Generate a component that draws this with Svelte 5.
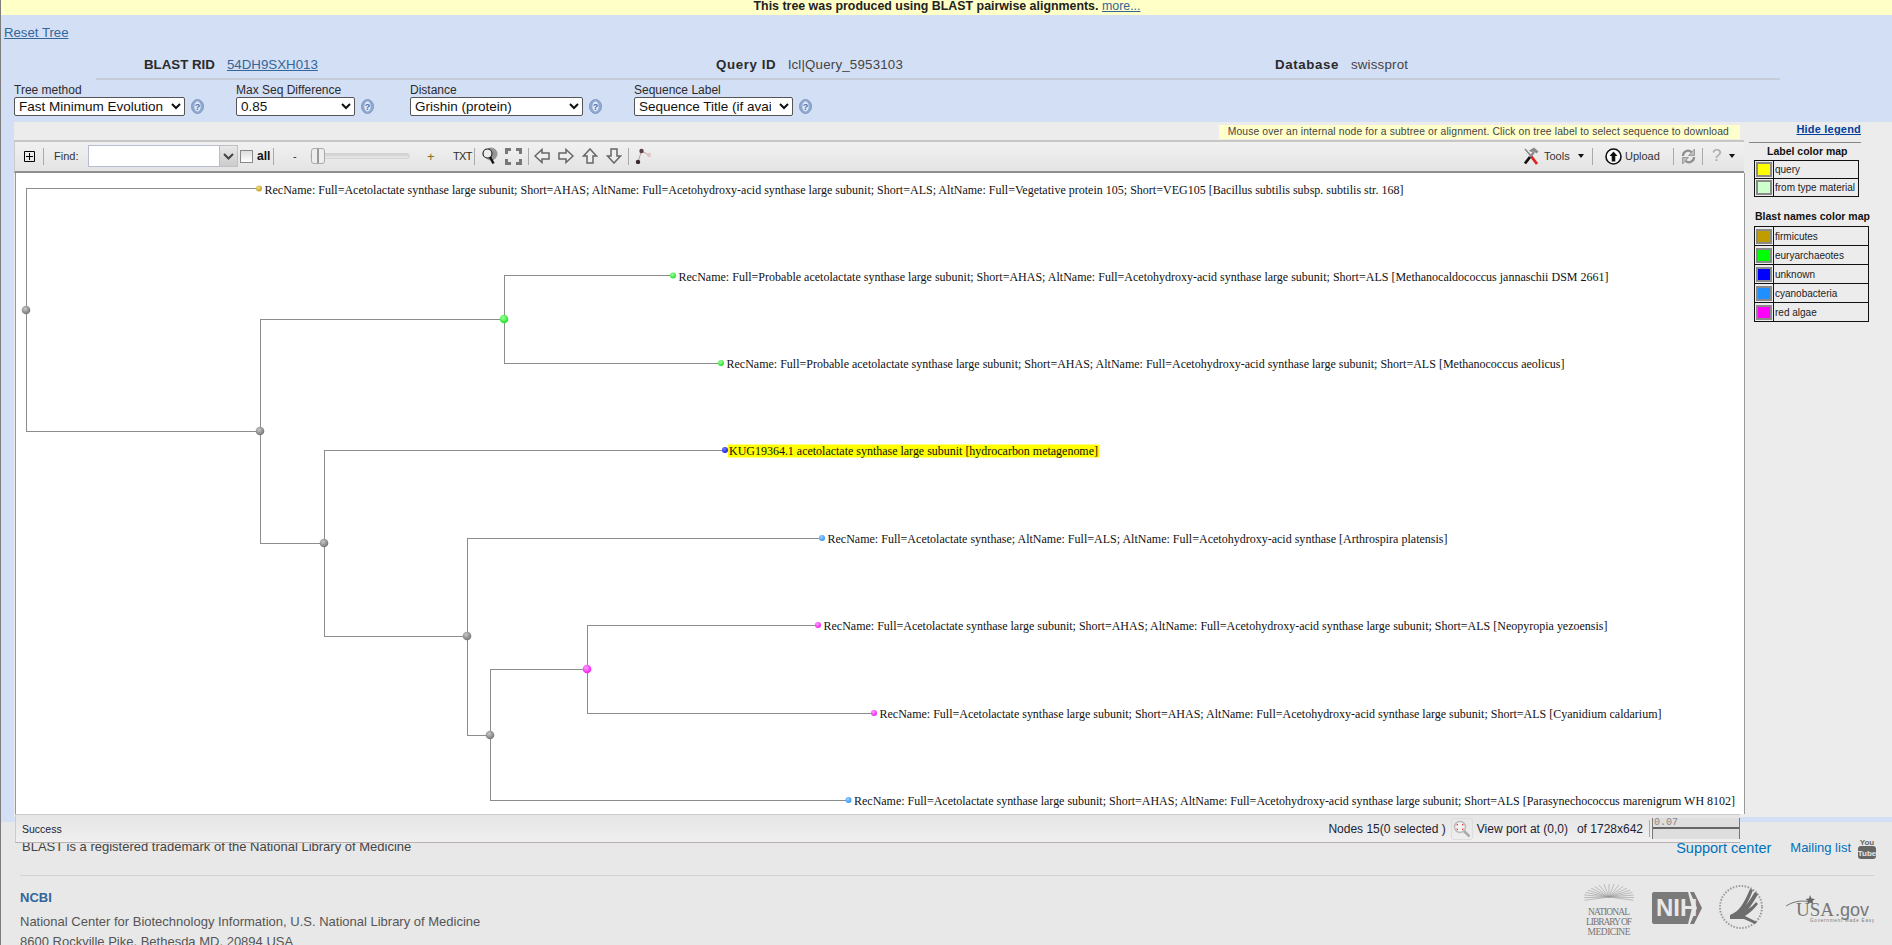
<script lang="ts">
  const treeNodes = [
    { id: "root", x: 26, y: 310, color: "gray", r: 4.3 },
    { id: "a", parent: "root", x: 260, y: 431, color: "gray", r: 4.3 },
    { id: "b", parent: "a", x: 504, y: 319, color: "green", r: 4.3 },
    { id: "c", parent: "a", x: 324, y: 543, color: "gray", r: 4.3 },
    { id: "d", parent: "c", x: 467, y: 636, color: "gray", r: 4.3 },
    { id: "e", parent: "d", x: 490, y: 735, color: "gray", r: 4.3 },
    { id: "f", parent: "e", x: 587, y: 669, color: "magenta", r: 4.3 },
    {
      id: "t1", parent: "root", x: 259, y: 188.5, color: "gold", r: 3, w: 1139,
      label: "RecName: Full=Acetolactate synthase large subunit; Short=AHAS; AltName: Full=Acetohydroxy-acid synthase large subunit; Short=ALS; AltName: Full=Vegetative protein 105; Short=VEG105 [Bacillus subtilis subsp. subtilis str. 168]",
    },
    {
      id: "t2", parent: "b", x: 673, y: 275.5, color: "green", r: 3, w: 930,
      label: "RecName: Full=Probable acetolactate synthase large subunit; Short=AHAS; AltName: Full=Acetohydroxy-acid synthase large subunit; Short=ALS [Methanocaldococcus jannaschii DSM 2661]",
    },
    {
      id: "t3", parent: "b", x: 721, y: 363, color: "green", r: 3, w: 838,
      label: "RecName: Full=Probable acetolactate synthase large subunit; Short=AHAS; AltName: Full=Acetohydroxy-acid synthase large subunit; Short=ALS [Methanococcus aeolicus]",
    },
    {
      id: "t4", parent: "c", x: 725, y: 450, color: "blue", r: 3, w: 369, query: true,
      label: "KUG19364.1 acetolactate synthase large subunit [hydrocarbon metagenome]",
    },
    {
      id: "t5", parent: "d", x: 822, y: 538, color: "dodger", r: 3, w: 620,
      label: "RecName: Full=Acetolactate synthase; AltName: Full=ALS; AltName: Full=Acetohydroxy-acid synthase [Arthrospira platensis]",
    },
    {
      id: "t6", parent: "f", x: 818, y: 625, color: "magenta", r: 3, w: 784,
      label: "RecName: Full=Acetolactate synthase large subunit; Short=AHAS; AltName: Full=Acetohydroxy-acid synthase large subunit; Short=ALS [Neopyropia yezoensis]",
    },
    {
      id: "t7", parent: "f", x: 874, y: 713, color: "magenta", r: 3, w: 782,
      label: "RecName: Full=Acetolactate synthase large subunit; Short=AHAS; AltName: Full=Acetohydroxy-acid synthase large subunit; Short=ALS [Cyanidium caldarium]",
    },
    {
      id: "t8", parent: "e", x: 848.5, y: 800, color: "dodger", r: 3, w: 881,
      label: "RecName: Full=Acetolactate synthase large subunit; Short=AHAS; AltName: Full=Acetohydroxy-acid synthase large subunit; Short=ALS [Parasynechococcus marenigrum WH 8102]",
    },
  ];

  const byId = Object.fromEntries(treeNodes.map((n) => [n.id, n]));

  function branch(n) {
    const p = byId[n.parent];
    return `M${p.x} ${p.y}V${n.y}H${n.x}`;
  }

  const palette = {
    gray: ["#c8c8c8", "#6e6e6e"],
    green: ["#a0ffa0", "#16e016"],
    magenta: ["#ffa0ff", "#f010f0"],
    gold: ["#f0e090", "#b89a10"],
    blue: ["#8080ff", "#1010e0"],
    dodger: ["#a0d0ff", "#2a90f0"],
  };

  const labelMap = [
    { color: "#ffff00", name: "query" },
    { color: "#ccffcc", name: "from type material" },
  ];
  const blastMap = [
    { color: "#c09c00", name: "firmicutes" },
    { color: "#00ff00", name: "euryarchaeotes" },
    { color: "#0000ff", name: "unknown" },
    { color: "#1e90ff", name: "cyanobacteria" },
    { color: "#ff00ff", name: "red algae" },
  ];

  // fan of thin lines on the library logo
  const rays = Array.from({ length: 19 }, (_, i) => {
    const a = Math.PI * (-0.08 + (1.16 * i) / 18);
    return { x: 25 + Math.cos(a) * 25, y: 14 - Math.sin(a) * 13 };
  });
</script>

{#snippet help()}
  <svg class="help" width="13" height="15" viewBox="0 0 13 15">
    <ellipse cx="6.5" cy="7.5" rx="6" ry="7" fill="#8fa9d2" stroke="#8298bf" />
    <ellipse cx="6.5" cy="7.5" rx="3.2" ry="5" fill="#dfe9f8" />
    <text x="6.5" y="11" text-anchor="middle" class="help-mark">?</text>
  </svg>
{/snippet}

{#snippet arrow(rotate)}
  <svg class="arrow" width="16" height="16" viewBox="0 0 16 16">
    <path
      d="M1 8 8 1.5V5h7v6H8v3.5z"
      fill="#eee"
      stroke="#666"
      stroke-width="1.5"
      transform={`rotate(${rotate} 8 8)`}
    />
  </svg>
{/snippet}

<div class="page">
  <div class="notice">
    <b>This tree was produced using BLAST pairwise alignments.</b>
    <a href="#more">more...</a>
  </div>

  <div class="blue">
    <div class="reset"><a href="#reset">Reset Tree</a></div>

    <div class="info">
      <div><b>BLAST RID</b><a href="#rid">54DH9SXH013</a></div>
      <div><b>Query ID</b><span>lcl|Query_5953103</span></div>
      <div><b>Database</b><span>swissprot</span></div>
    </div>

    <div class="form">
      <div class="field">
        <label for="method">Tree method</label>
        <div class="control">
          <select id="method" class="w-method"><option>Fast Minimum Evolution</option></select>
          {@render help()}
        </div>
      </div>
      <div class="field">
        <label for="seqdiff">Max Seq Difference</label>
        <div class="control">
          <select id="seqdiff" class="w-diff"><option>0.85</option></select>
          {@render help()}
        </div>
      </div>
      <div class="field">
        <label for="dist">Distance</label>
        <div class="control">
          <select id="dist" class="w-dist"><option>Grishin (protein)</option></select>
          {@render help()}
        </div>
      </div>
      <div class="field">
        <label for="seqlabel">Sequence Label</label>
        <div class="control">
          <select id="seqlabel" class="w-label"><option>Sequence Title (if available)</option></select>
          {@render help()}
        </div>
      </div>
    </div>

    <div class="workspace">
      <div class="viewer">
        <div class="strip">
          <span class="hint">Mouse over an internal node for a subtree or alignment. Click on tree label to select sequence to download</span>
        </div>

        <div class="toolbar">
          <svg class="plus" width="11" height="11" viewBox="0 0 11 11">
            <path d="M.5.5h10v10H.5zM5.5 2v7M2 5.5h7" fill="none" stroke="#000" />
          </svg>
          <i class="sep s-plus"></i>
          <span class="find">Find:</span>
          <div class="combo">
            <input aria-label="Find" />
            <span class="combo-btn">
              <svg width="11" height="7" viewBox="0 0 11 7"><path d="M1 1l4.5 4.5L10 1" fill="none" stroke="#444" stroke-width="2" /></svg>
            </span>
          </div>
          <span class="check"></span>
          <b class="all">all</b>
          <i class="sep s-all"></i>
          <span class="minus">-</span>
          <div class="slider"><span class="thumb"></span></div>
          <span class="add">+</span>
          <span class="txt">TXT</span>
          <i class="sep s-txt"></i>
          <svg class="mag" width="17" height="19" viewBox="0 0 17 19">
            <circle cx="10" cy="7" r="6.5" fill="#969696" />
            <circle cx="6.500" cy="6.500" r="4.500" fill="#ececec" stroke="#222" stroke-width="1.200" />
            <path d="M9 10l3.500 6.500" stroke="#111" stroke-width="2.400" />
          </svg>
          <svg class="expand" width="17" height="17" viewBox="0 0 17 17">
            <path d="M1.500 6V1.500H6M11 1.500h4.500V6M15.500 11v4.500H11M6 15.500H1.500V11" fill="none" stroke="#777" stroke-width="3" />
          </svg>
          <i class="sep s-exp"></i>
          <span class="arrows">
            {@render arrow(0)}
            {@render arrow(180)}
            {@render arrow(90)}
            {@render arrow(270)}
          </span>
          <i class="sep s-arr"></i>
          <svg class="layout" width="16" height="16" viewBox="0 0 16 16">
            <path d="M3 14 6.500 3 14 7" fill="none" stroke="#b9a0a0" />
            <circle cx="3" cy="14" r="2.200" fill="#3a2a2a" />
            <circle cx="6.500" cy="3" r="2.200" fill="#5a4040" />
            <circle cx="14" cy="7" r="2.200" fill="#e0c8c8" />
          </svg>

          <svg class="tools" width="16" height="18" viewBox="0 0 16 18">
            <path d="M2 2 8 9" stroke="#8a8a8a" stroke-width="1.600" />
            <path d="M8 9l6 8" stroke="#d22" stroke-width="2.800" />
            <path d="M6 3.500 11 .5l4.500 4-2 2L11 4.500 8 5z" fill="#8a8a8a" />
            <path d="M11 5 7 10" stroke="#8a8a8a" stroke-width="2.200" />
            <path d="M7 10 2 16.500" stroke="#111" stroke-width="2.800" />
          </svg>
          <span class="tools-label">Tools</span>
          <i class="caret c-tools"></i>
          <i class="sep s-tools"></i>
          <svg class="upload" width="17" height="17" viewBox="0 0 17 17">
            <circle cx="8.500" cy="8.500" r="7.500" fill="#fff" stroke="#111" stroke-width="1.600" />
            <path d="M8.500 3.500l4 4.500H10.300v5.500H6.700V8H4.500z" fill="#111" />
          </svg>
          <span class="upload-label">Upload</span>
          <i class="sep s-up"></i>
          <svg class="refresh" width="15" height="17" viewBox="0 0 15 17">
            <path d="M2 8A5 5 0 0 1 10.500 4.200" fill="none" stroke="#8f8f8f" stroke-width="2.200" />
            <path d="M13.500 1v6.500H7.500z" fill="#bdbdbd" stroke="#8f8f8f" stroke-width=".8" />
            <path d="M13 9A5 5 0 0 1 4.500 12.800" fill="none" stroke="#8f8f8f" stroke-width="2.200" />
            <path d="M1.500 16V9.500H7.500z" fill="#bdbdbd" stroke="#8f8f8f" stroke-width=".8" />
          </svg>
          <i class="sep s-ref"></i>
          <span class="q">?</span>
          <i class="caret c-q"></i>
        </div>

        <div class="tree">
          <svg width="1727" height="640" viewBox="16 173 1727 640">
            <defs>
              {#each Object.entries(palette) as [name, stops]}
                <radialGradient id={`ball-${name}`} cx="40%" cy="35%" r="70%">
                  <stop offset="0" stop-color={stops[0]} />
                  <stop offset="1" stop-color={stops[1]} />
                </radialGradient>
              {/each}
            </defs>
            {#each treeNodes as n}
              {#if n.parent}
                <path d={branch(n)} fill="none" stroke="#8c8c8c" shape-rendering="crispEdges" />
              {/if}
            {/each}
            {#each treeNodes as n}
              <circle cx={n.x} cy={n.y} r={n.r} fill={`url(#ball-${n.color})`} />
              {#if n.query}
                <rect x={n.x + 3} y={n.y - 5.5} width={n.w + 2} height="13" fill="#ffff00" />
              {/if}
              {#if n.label}
                <text x={n.query ? n.x + 4 : n.x + 5.5} y={n.y + 5} textLength={n.w} class="leaf">{n.label}</text>
              {/if}
            {/each}
          </svg>
        </div>

        <div class="status">
          <span class="success">Success</span>
          <div class="stats">
            <span class="nodes">Nodes 15(0 selected )</span>
            <span class="zoom-btn">
              <svg width="18" height="18" viewBox="0 0 18 18">
                <circle cx="7" cy="7" r="5.500" fill="#f2f2f2" stroke="#bbb" stroke-width="1.500" />
                <path d="M5 4.500H4V5.500M9 4.500h1v1M10 8.500v1H9M5 9.500H4v-1" fill="none" stroke="#e03030" />
                <path d="M11 11l5.500 5.500" stroke="#aaa" stroke-width="2.500" />
              </svg>
            </span>
            <span>View port at (0,0)</span>
            <span class="extent">of 1728x642</span>
            <i class="sep s-extent"></i>
            <div class="scale"><span>0.07</span></div>
          </div>
        </div>
      </div>

      <aside class="legend">
        <a href="#hide" class="hide">Hide legend</a>
        <h4 class="first">Label color map</h4>
        <table class="small">
          <tbody>
            {#each labelMap as row}
              <tr><td class="sw"><span style:background={row.color}></span></td><td>{row.name}</td></tr>
            {/each}
          </tbody>
        </table>
        <h4 class="second">Blast names color map</h4>
        <table class="large">
          <tbody>
            {#each blastMap as row}
              <tr><td class="sw"><span style:background={row.color}></span></td><td>{row.name}</td></tr>
            {/each}
          </tbody>
        </table>
      </aside>
    </div>
  </div>

  <footer>
    <div class="foot-top">
      <span class="trademark">BLAST is a registered trademark of the National Library of Medicine</span>
      <div class="foot-links">
        <a href="#support">Support center</a>
        <a href="#mail">Mailing list</a>
        <svg width="20" height="24" viewBox="0 0 20 24">
          <text x="10" y="8.500" text-anchor="middle" class="yt">You</text>
          <rect x="1" y="10" width="18" height="13" rx="3" fill="#666" />
          <text x="10" y="20" text-anchor="middle" class="yt yt-tube">Tube</text>
        </svg>
      </div>
    </div>
    <div class="foot-main">
      <div class="address">
        <a href="#ncbi">NCBI</a>
        <p>National Center for Biotechnology Information, U.S. National Library of Medicine</p>
        <p>8600 Rockville Pike, Bethesda MD, 20894 USA</p>
      </div>
      <div class="logos">
        <svg width="52" height="54" viewBox="0 0 52 54">
          {#each rays as r}
            <path d={`M25 14L${r.x} ${r.y}`} stroke="#999" stroke-width=".6" />
          {/each}
          <text x="25" y="32" text-anchor="middle" textLength="42" class="nlm">NATIONAL</text>
          <text x="25" y="42" text-anchor="middle" textLength="46" class="nlm">LIBRARY OF</text>
          <text x="25" y="52" text-anchor="middle" textLength="43" class="nlm">MEDICINE</text>
        </svg>
        <svg class="nih" width="50" height="32" viewBox="0 0 50 32">
          <path d="M2 0H36L40 16 36 32H2a2 2 0 0 1-2-2V2a2 2 0 0 1 2-2z" fill="#7a7a7a" />
          <path d="M38 0h4l8 16-8 16h-4l7-16z" fill="#7a7a7a" />
          <text x="4" y="24" class="nih-text">NIH</text>
        </svg>
        <svg class="hhs" width="52" height="48" viewBox="0 0 52 48">
          <circle cx="23" cy="24" r="21" fill="none" stroke="#999" stroke-width="2" stroke-dasharray="1.500 1.500" />
          <path d="M12 32C22 28 26 20 32 6l3 1c-3 8-5 12-7 15 3-3 6-9 9-13l3 2c-4 7-7 12-10 15 3-2 6-4 8-7l2 2c-4 5-8 9-13 12l12 6-2 2-11-5-14 0z" fill="#6d6d6d" />
        </svg>
        <svg class="usa" width="88" height="30" viewBox="0 0 88 30">
          <path d="M0 11C8 6 16 5 24 7" fill="none" stroke="#777" />
          <path d="M24 0l1.500 3.500 3.500.5-2.500 2 1 3.500-3.500-2-3 2 1-3.500-2.500-2 3.500-.5z" fill="#666" />
          <text x="10" y="21" class="usa-big">USA</text>
          <text x="49" y="21" class="usa-gov">.gov</text>
          <text x="24" y="27" textLength="64" class="usa-small">Government Made Easy</text>
        </svg>
      </div>
    </div>
  </footer>
</div>

<style>
  :global(body) {
    margin: 0;
    background: #e8e8e8;
  }
  * {
    box-sizing: border-box;
  }
  .page {
    height: 945px;
    overflow: hidden;
    border-left: 1px solid #7d7d7d;
    font-family: "Liberation Sans", Arial, sans-serif;
    color: #2b2b2b;
    font-size: 13px;
  }
  a {
    color: #336699;
  }
  .notice {
    height: 15px;
    background: #ffffc8;
    text-align: center;
    font-size: 12.4px;
    line-height: 13px;
    color: #222;
    padding-left: 1px;
  }
  .blue {
    height: 807px;
    background: #d3dff5;
  }
  .reset {
    height: 36px;
    padding: 11px 0 0 3px;
    font-size: 13.2px;
    line-height: 14px;
  }
  .info {
    display: grid;
    grid-template-columns: 572px 559px 1fr;
    height: 29px;
    margin-left: 95px;
    width: 1684px;
    padding: 6px 0 0 48px;
    border-bottom: 2px solid #c6ccd8;
    font-size: 13.3px;
    line-height: 15px;
  }
  .info b {
    margin-right: 12px;
  }
  .info div + div b {
    letter-spacing: 0.6px;
  }
  .info span {
    color: #444;
    letter-spacing: 0.2px;
  }
  .form {
    display: grid;
    grid-template-columns: 222px 174px 224px 1fr;
    height: 42px;
    padding: 3px 0 0 13px;
  }
  .field label {
    display: block;
    height: 14px;
    font-size: 12px;
    line-height: 14px;
  }
  .control {
    display: flex;
    align-items: center;
    gap: 6px;
  }
  select {
    height: 19px;
    font: 13.5px "Liberation Sans", Arial, sans-serif;
    background: #fff;
    color: #111;
    border: 1px solid #555;
    border-radius: 2px;
  }
  .w-method { width: 171px; }
  .w-diff { width: 119px; }
  .w-dist { width: 173px; }
  .w-label { width: 159px; padding-right: 5px; }
  .help-mark {
    font: bold 9px "Liberation Sans", sans-serif;
    fill: #4a70b0;
  }
  .workspace {
    display: grid;
    grid-template-columns: 1731px 135px;
    grid-template-rows: 695px;
    margin-left: 13px;
    background: #ececec;
  }
  .viewer {
    position: relative;
    z-index: 1;
    height: 721px;
  }
  .strip {
    display: flex;
    justify-content: flex-end;
    height: 18px;
    padding-top: 3px;
    margin-right: 5px;
  }
  .hint {
    height: 14px;
    padding: 0 11px 0 9px;
    background: #ffffcc;
    font-size: 10.3px;
    line-height: 14px;
    letter-spacing: 0.15px;
    color: #444;
    white-space: nowrap;
  }
  .toolbar {
    display: flex;
    align-items: center;
    height: 33px;
    margin-right: 1px;
    padding-bottom: 1px;
    border-top: 2px solid #c9c6c6;
    border-bottom: 2px solid #8f8f8f;
    border-left: 1px solid #ccc;
    background: linear-gradient(#f1f1f1, #e4e4e4);
    font-size: 11px;
    white-space: nowrap;
  }
  .toolbar .plus { margin-left: 9px; }
  .sep {
    display: block;
    width: 1px;
    height: 17px;
    background: #aaa;
    flex: none;
  }
  .s-plus { margin-left: 8px; }
  .find { margin-left: 10px; color: #333; width: 34px; font-size: 11px; }
  .combo {
    display: flex;
    width: 150px;
    height: 22px;
  }
  .combo input {
    width: 132px;
    height: 22px;
    border: 1px solid #b8bcd0;
    background: #fff;
    padding: 0;
  }
  .combo-btn {
    display: flex;
    align-items: center;
    justify-content: center;
    width: 18px;
    background: linear-gradient(#e8e8e8, #ccc);
    border: 1px solid #c0c0c0;
    border-left: 0;
  }
  .check {
    width: 13px;
    height: 13px;
    margin-left: 2px;
    border: 1px solid #888;
    background: linear-gradient(#ddd, #fff);
  }
  .all { margin-left: 4px; font-size: 12px; color: #111; width: 16px; }
  .s-all { margin-left: 0; }
  .minus { margin-left: 19px; width: 17px; }
  .slider {
    position: relative;
    width: 100px;
    height: 6px;
    border-radius: 3px;
    background: linear-gradient(#d0d0d0, #e8e8e8);
    border: 1px solid #d4d4d4;
  }
  .thumb {
    position: absolute;
    left: 0;
    top: -6px;
    width: 14px;
    height: 16px;
    border: 1px solid #aaa;
    border-radius: 3px;
    background: linear-gradient(90deg, #eee 45%, #999 45%, #999 55%, #eee 55%);
  }
  .add { margin-left: 17px; width: 10px; font-size: 13px; color: #8a6d1a; }
  .txt { margin-left: 16px; width: 21px; letter-spacing: -0.6px; font-size: 11px; }
  .s-txt { margin-left: 0; }
  .mag { margin-left: 6px; }
  .expand { margin-left: 7px; }
  .s-exp { margin-left: 6px; }
  .arrows {
    display: flex;
    gap: 8px;
    margin-left: 5px;
  }
  .s-arr { margin-left: 6px; }
  .layout { margin-left: 6px; }
  .tools { margin-left: auto; }
  .tools-label {
    margin-left: 5px;
    width: 30px;
    font-size: 11px;
    color: #333;
  }
  .caret {
    width: 0;
    height: 0;
    border: 3px solid transparent;
    border-top: 4px solid #111;
    border-bottom: 0;
    flex: none;
  }
  .c-tools { margin-left: 4px; }
  .s-tools { margin-left: 8px; }
  .upload { margin-left: 12px; }
  .upload-label {
    margin-left: 3px;
    width: 37px;
    font-size: 11px;
    color: #333;
  }
  .s-up { margin-left: 11px; }
  .refresh { margin-left: 7px; }
  .s-ref { margin-left: 6px; }
  .q {
    margin-left: 9px;
    width: 9px;
    font-size: 17px;
    color: #aaa;
  }
  .c-q { margin: 0 9px 0 8px; }
  .tree {
    height: 641px;
    margin-right: 0;
    background: #fff;
    border-left: 1px solid #999;
    border-right: 1px solid #999;
    overflow: hidden;
    margin-left: 1px;
  }
  .tree svg {
    display: block;
  }
  .leaf {
    font: 12px "Liberation Serif", "Times New Roman", serif;
    fill: #111;
  }
  .status {
    display: flex;
    align-items: center;
    justify-content: space-between;
    width: 1725px;
    height: 29px;
    margin-left: 1px;
    padding: 0 0 0 6px;
    border-top: 1px solid #ccc;
    border-left: 1px solid #ccc;
    border-bottom: 1px solid #b9b0b0;
    background: linear-gradient(#e5e5e5, #f0f0f0);
    font-size: 12px;
    color: #223;
  }
  .success {
    font-size: 10.5px;
  }
  .stats {
    display: flex;
    align-items: center;
  }
  .zoom-btn {
    display: flex;
    align-items: center;
    justify-content: center;
    width: 22px;
    height: 22px;
    margin: 0 4px 0 5px;
    border: 1px solid #ddd;
    border-radius: 3px;
  }
  .extent {
    margin-left: 9px;
  }
  .s-extent {
    margin: 0 2px 0 6px;
  }
  .scale {
    position: relative;
    width: 88px;
    height: 21px;
    background: #dedede;
    font: 10px "Liberation Mono", monospace;
    color: #888;
    line-height: 10px;
    padding-left: 1px;
    border-left: 1px solid #777;
    border-right: 1px solid #777;
  }
  .scale::after {
    content: "";
    position: absolute;
    left: 0;
    right: 0;
    top: 9px;
    height: 2px;
    background: #666;
  }
  .legend {
    padding: 0 0 0 4px;
    font-size: 10px;
    color: #222;
  }
  .hide {
    display: block;
    margin-top: 1px;
    margin-right: 19px;
    height: 20px;
    padding-bottom: 5px;
    border-bottom: 1px solid #888;
    text-align: right;
    font-weight: bold;
    font-size: 11px;
    line-height: 13px;
    color: #003f9e;
    letter-spacing: 0.2px;
  }
  .legend h4 {
    margin: 0;
    font-size: 10.5px;
    line-height: 13px;
    color: #111;
  }
  .first {
    padding: 2px 0 0 18px;
    height: 17px;
  }
  .second {
    padding: 0 0 0 6px;
    height: 16px;
    margin-top: 13px !important;
  }
  .legend table {
    border-collapse: collapse;
    margin-left: 5px;
    font-size: 10px;
  }
  .legend td {
    border: 1px solid #111;
    padding: 0 0 0 1px;
    height: 18px;
    line-height: 13px;
    white-space: nowrap;
  }
  .small { width: 105px; }
  .large { width: 115px; }
  .large td { height: 19px; }
  .legend td.sw {
    width: 18px;
    padding: 1px;
  }
  .sw span {
    display: block;
    width: 16px;
    height: 15px;
    border: 2px solid #8a8a8a;
  }
  footer {
    padding: 12px 18px 0 19px;
    background: #e8e8e8;
    height: 123px;
  }
  .foot-top {
    display: flex;
    justify-content: space-between;
    align-items: center;
    height: 42px;
    padding: 0 0 16px 2px;
    border-bottom: 1px solid #d2d2d2;
    font-size: 13px;
    color: #444;
    width: 1854px;
  }
  .foot-links {
    display: flex;
    align-items: center;
    gap: 6px;
    margin-right: -3px;
    margin-top: 2px;
  }
  .foot-links a {
    color: #0071bc;
    text-decoration: none;
    font-size: 13px;
  }
  .foot-links a:first-child {
    margin-right: 13px;
    font-size: 14.5px;
  }
  .yt {
    font: bold 8px "Liberation Sans", sans-serif;
    fill: #666;
  }
  .yt-tube { fill: #e8e8e8; }
  .foot-main {
    display: flex;
    justify-content: space-between;
    width: 1854px;
  }
  .address {
    padding-top: 14px;
    font-size: 13px;
    color: #555;
  }
  .address a {
    display: block;
    font-weight: bold;
    color: #336699;
    text-decoration: none;
    font-size: 13px;
    line-height: 16px;
  }
  .address p {
    margin: 8px 0 0;
    line-height: 16px;
    font-size: 13px;
  }
  .address p + p {
    margin-top: 4px;
  }
  .logos {
    display: flex;
    align-items: flex-start;
    gap: 16px;
    padding-top: 7px;
  }
  .nih { margin-top: 9px; }
  .usa { margin-top: 12px; margin-left: 0; }
  .nlm {
    font: 9.5px "Liberation Serif", serif;
    fill: #777;
  }
  .nih-text {
    font: bold 24px "Liberation Sans", sans-serif;
    fill: #e8e8e8;
  }
  .usa-big {
    font: 19px "Liberation Serif", serif;
    fill: #777;
  }
  .usa-gov {
    font: 18px "Liberation Sans", sans-serif;
    fill: #777;
  }
  .usa-small {
    font: 4.5px "Liberation Sans", sans-serif;
    fill: #777;
  }
</style>
